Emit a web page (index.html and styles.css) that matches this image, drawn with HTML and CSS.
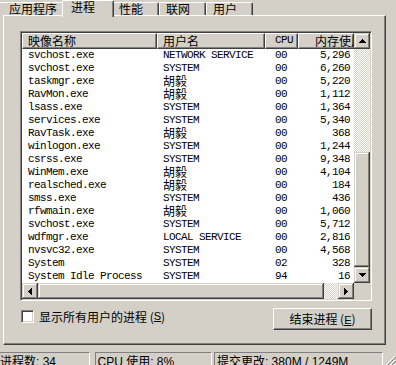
FILE: index.html
```html
<!DOCTYPE html>
<html lang="zh-CN">
<head>
    <meta charset="UTF-8">
    <title>Windows 任务管理器</title>
    <link rel="stylesheet" href="styles.css">
</head>
<body>
    <div class="tabs">
        <div class="tab">应用程序</div>
        <div class="tab active">进程</div>
        <div class="tab">性能</div>
        <div class="tab">联网</div>
        <div class="tab">用户</div>
    </div>

    <div class="panel">
        <div class="listbox">
            <div class="list">
                <div class="row head">
                    <div class="col name">映像名称</div>
                    <div class="col user">用户名</div>
                    <div class="col cpu">CPU</div>
                    <div class="col mem">内存使用</div>
                </div>
                <div class="row"><span class="col name">svchost.exe</span><span class="col user">NETWORK SERVICE</span><span class="col cpu">00</span><span class="col mem">5,296</span></div>
                <div class="row"><span class="col name">svchost.exe</span><span class="col user">SYSTEM</span><span class="col cpu">00</span><span class="col mem">6,260</span></div>
                <div class="row"><span class="col name">taskmgr.exe</span><span class="col user zh">胡毅</span><span class="col cpu">00</span><span class="col mem">5,220</span></div>
                <div class="row"><span class="col name">RavMon.exe</span><span class="col user zh">胡毅</span><span class="col cpu">00</span><span class="col mem">1,112</span></div>
                <div class="row"><span class="col name">lsass.exe</span><span class="col user">SYSTEM</span><span class="col cpu">00</span><span class="col mem">1,364</span></div>
                <div class="row"><span class="col name">services.exe</span><span class="col user">SYSTEM</span><span class="col cpu">00</span><span class="col mem">5,340</span></div>
                <div class="row"><span class="col name">RavTask.exe</span><span class="col user zh">胡毅</span><span class="col cpu">00</span><span class="col mem">368</span></div>
                <div class="row"><span class="col name">winlogon.exe</span><span class="col user">SYSTEM</span><span class="col cpu">00</span><span class="col mem">1,244</span></div>
                <div class="row"><span class="col name">csrss.exe</span><span class="col user">SYSTEM</span><span class="col cpu">00</span><span class="col mem">9,348</span></div>
                <div class="row"><span class="col name">WinMem.exe</span><span class="col user zh">胡毅</span><span class="col cpu">00</span><span class="col mem">4,104</span></div>
                <div class="row"><span class="col name">realsched.exe</span><span class="col user zh">胡毅</span><span class="col cpu">00</span><span class="col mem">184</span></div>
                <div class="row"><span class="col name">smss.exe</span><span class="col user">SYSTEM</span><span class="col cpu">00</span><span class="col mem">436</span></div>
                <div class="row"><span class="col name">rfwmain.exe</span><span class="col user zh">胡毅</span><span class="col cpu">00</span><span class="col mem">1,060</span></div>
                <div class="row"><span class="col name">svchost.exe</span><span class="col user">SYSTEM</span><span class="col cpu">00</span><span class="col mem">5,712</span></div>
                <div class="row"><span class="col name">wdfmgr.exe</span><span class="col user">LOCAL SERVICE</span><span class="col cpu">00</span><span class="col mem">2,816</span></div>
                <div class="row"><span class="col name">nvsvc32.exe</span><span class="col user">SYSTEM</span><span class="col cpu">00</span><span class="col mem">4,568</span></div>
                <div class="row"><span class="col name">System</span><span class="col user">SYSTEM</span><span class="col cpu">02</span><span class="col mem">328</span></div>
                <div class="row"><span class="col name">System Idle Process</span><span class="col user">SYSTEM</span><span class="col cpu">94</span><span class="col mem">16</span></div>
            </div>

            <div class="vscroll">
                <div class="sbtn"><svg width="7" height="4"><path d="M3 0h1v1h1v1h1v1h1v1H0V3h1V2h1V1h1z"/></svg></div>
                <div class="track"></div>
                <div class="thumb"></div>
                <div class="sbtn"><svg width="7" height="4"><path d="M0 0h7v1H6v1H5v1H4v1H3V3H2V2H1V1H0z"/></svg></div>
            </div>

            <div class="hscroll">
                <div class="sbtn"><svg width="4" height="7"><path d="M0 3h1V2h1V1h1V0h1v7H3V6H2V5H1V4H0z"/></svg></div>
                <div class="thumb"></div>
                <div class="track"></div>
                <div class="sbtn"><svg width="4" height="7"><path d="M0 0h1v1h1v1h1v1h1v1H3v1H2v1H1v1H0z"/></svg></div>
            </div>

            <div class="corner"></div>
        </div>

        <div class="controls">
            <label class="check"><span class="box"></span>显示所有用户的进程 (<u>S</u>)</label>
            <div class="button">结束进程 (<u>E</u>)</div>
        </div>
    </div>

    <div class="statusbar">
        <div class="cell c1">进程数: 34</div>
        <div class="cell c2">CPU 使用: 8%</div>
        <div class="cell c3">提交更改: 380M / 1249M</div>
        <svg class="grip" width="11" height="13">
            <path d="M10 3L1 12M10 7L5 12M10 11L9 12" stroke="#fff"/>
            <path d="M11 4L2 13M11 8L6 13" stroke="#808080"/>
        </svg>
    </div>
</body>
</html>
```

FILE: styles.css
```css
* {
    box-sizing: border-box;
}

body {
    margin: 0;
    width: 396px;
    height: 365px;
    overflow: hidden;
    background: #d4d0c8;
    color: #000;
    font-family: "Noto Sans CJK SC", sans-serif;
    font-size: 12px;
}

/* tabs */

.tabs {
    display: flex;
    align-items: flex-end;
    height: 15px;
    margin-left: -1px;
}

.tab {
    height: 13px;
    min-width: 47px;
    padding: 0 6px;
    line-height: 11px;
    white-space: nowrap;
    border-top: 1px solid #fff;
    border-left: 1px solid #fff;
    border-right: 1px solid #404040;
    border-radius: 2px 2px 0 0;
    box-shadow: inset -1px 0 #808080;
}

.tab:first-child {
    padding-left: 9px;
}

.tab.active {
    position: relative;
    z-index: 1;
    height: 17px;
    min-width: 52px;
    margin: 0 -2px -2px;
    padding-left: 8px;
    line-height: 12px;
    background: #d4d0c8;
}

/* panel */

.panel {
    width: 383px;
    height: 330px;
    margin-left: 3px;
    padding: 15px 0 0 16px;
    border-top: 1px solid #fff;
    border-left: 1px solid #fff;
    border-right: 1px solid #404040;
    border-bottom: 1px solid #404040;
    box-shadow: inset -1px -1px #808080;
}

.listbox {
    display: grid;
    grid-template-columns: 332px 16px;
    grid-template-rows: 250px 16px;
    width: 352px;
    height: 270px;
    padding: 1px;
    background: #fff;
    border: 1px solid;
    border-color: #808080 #fff #fff #808080;
    box-shadow: inset 1px 1px #404040, inset -1px -1px #d4d0c8;
}

.list {
    overflow: hidden;
    background: #fff;
    font-family: "Liberation Mono", "Noto Sans CJK SC", monospace;
    font-size: 11px;
    letter-spacing: -0.6px;
}

.row {
    display: flex;
    height: 13px;
    line-height: 13px;
    white-space: nowrap;
}

.col {
    overflow: hidden;
}

.name {
    width: 135px;
    padding-left: 6px;
}

.user {
    width: 108px;
    padding-left: 6px;
}

.cpu {
    width: 33px;
    padding-left: 10px;
}

.mem {
    width: 56px;
    padding-right: 4px;
    text-align: right;
}

.zh {
    font-family: "Noto Sans CJK SC", sans-serif;
    font-size: 12px;
    line-height: 11px;
    letter-spacing: 0;
}

.head {
    height: 16px;
    font-family: "Noto Sans CJK SC", sans-serif;
    font-size: 12px;
    letter-spacing: 0;
}

.head .col {
    height: 16px;
    line-height: 13px;
    background: #d4d0c8;
    border-top: 1px solid #fff;
    border-left: 1px solid #fff;
    border-right: 1px solid #404040;
    border-bottom: 1px solid #404040;
    box-shadow: inset -1px -1px #808080;
}

.head .name,
.head .user {
    padding-left: 5px;
}

.head .cpu {
    padding-left: 9px;
    font-family: "Liberation Mono", monospace;
    font-size: 11px;
    letter-spacing: -0.6px;
}

.head .mem {
    padding: 0 0 0 16px;
    text-align: left;
}

/* scrollbars */

.vscroll {
    display: flex;
    flex-direction: column;
}

.hscroll {
    display: flex;
}

.sbtn,
.thumb {
    background: #d4d0c8;
    box-shadow: inset -1px -1px #404040, inset 1px 1px #d4d0c8, inset -2px -2px #808080, inset 2px 2px #fff;
}

.sbtn {
    display: flex;
    align-items: center;
    justify-content: center;
    flex: none;
    width: 16px;
    height: 16px;
}

.sbtn svg {
    display: block;
}

.vscroll .thumb {
    height: 115px;
}

.hscroll .thumb {
    width: 286px;
}

.track {
    flex: 1;
    background-image: conic-gradient(#fff 25%, #d4d0c8 0 50%, #fff 0 75%, #d4d0c8 0);
    background-size: 2px 2px;
}

.corner {
    background: #d4d0c8;
}

/* controls */

.controls {
    display: flex;
    justify-content: space-between;
    width: 352px;
    margin-top: 7px;
}

.check {
    display: flex;
    align-items: center;
    height: 13px;
    margin: 2px 0 0 1px;
    line-height: 13px;
}

.box {
    width: 13px;
    height: 13px;
    margin-right: 5px;
    background: #fff;
    border: 1px solid;
    border-color: #808080 #fff #fff #808080;
    box-shadow: inset 1px 1px #404040, inset -1px -1px #d4d0c8;
}

.check u,
.button u {
    font-family: "Liberation Sans", sans-serif;
    font-size: 11px;
}

.button {
    width: 99px;
    height: 22px;
    line-height: 19px;
    text-align: center;
    border: 1px solid;
    border-color: #fff #404040 #404040 #fff;
    box-shadow: inset -1px -1px #808080;
}

/* status bar */

.statusbar {
    display: flex;
    margin-top: 7px;
    font-family: "Liberation Sans", "Noto Sans CJK SC", sans-serif;
}

.cell {
    height: 20px;
    padding-left: 2px;
    line-height: 18px;
    white-space: nowrap;
    border: 1px solid;
    border-color: #808080 #fff #fff #808080;
}

.c1 {
    width: 94px;
    margin-left: -4px;
    padding-left: 3px;
}

.c2 {
    width: 118px;
    margin-left: 5px;
}

.c3 {
    width: 170px;
    margin-left: 2px;
}

.grip {
    margin: 1px 0 0 2px;
}
```
